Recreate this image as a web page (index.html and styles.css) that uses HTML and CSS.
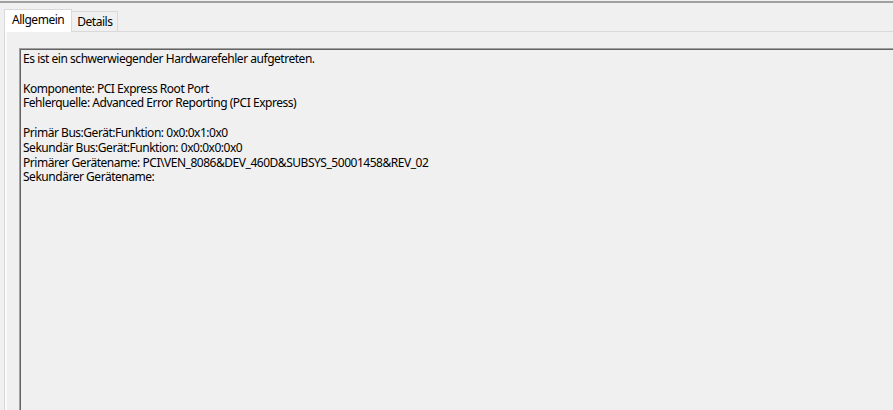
FILE: index.html
```html
<!DOCTYPE html>
<html lang="de">
<head>
<meta charset="utf-8">
<link rel="stylesheet" href="styles.css">
</head>
<body>
<div class="window">
  <div class="tabs">
    <div class="tab tab-active">Allgemein</div>
    <div class="tab">Details</div>
  </div>
  <div class="panel">
    <div class="textbox">
      <div class="line">Es ist ein schwerwiegender Hardwarefehler aufgetreten.</div>
      <div class="line">&nbsp;</div>
      <div class="line">Komponente: PCI Express Root Port</div>
      <div class="line">Fehlerquelle: Advanced Error Reporting (PCI Express)</div>
      <div class="line">&nbsp;</div>
      <div class="line">Primär Bus:Gerät:Funktion: 0x0:0x1:0x0</div>
      <div class="line">Sekundär Bus:Gerät:Funktion: 0x0:0x0:0x0</div>
      <div class="line">Primärer Gerätename: PCI\VEN_8086&amp;DEV_460D&amp;SUBSYS_50001458&amp;REV_02</div>
      <div class="line">Sekundärer Gerätename:</div>
    </div>
  </div>
</div>
</body>
</html>
```

FILE: styles.css
```css
html, body {
  margin: 0;
  padding: 0;
  background: #f0f0f0;
  overflow: hidden;
  width: 893px;
  height: 410px;
}

body {
  font-family: "Noto Sans", "Open Sans", sans-serif;
  font-size: 12px;
  letter-spacing: -0.47px;
  color: #000;
}

.window {
  box-sizing: border-box;
  margin-top: 1px;
  border-top: 2px solid #a0a0a0;
  height: 409px;
  display: flex;
  flex-direction: column;
}

.tabs {
  display: flex;
  align-items: flex-end;
  padding-left: 4px;
  margin-top: 6px;
  position: relative;
  z-index: 1;
}

.tab {
  height: 19px;
  padding: 0 4px 0 5px;
  border: 1px solid #d9d9d9;
  border-bottom: none;
  border-left: none;
  background: #f0f0f0;
  line-height: 19px;
}

.tab-active {
  height: 22px;
  padding: 0 7px 0 7px;
  border-left: 1px solid #d9d9d9;
  background: #ffffff;
  line-height: 20px;
  margin-bottom: -1px;
}

.panel {
  flex: 1;
  min-height: 0;
  display: flex;
  flex-direction: column;
  margin-left: 4px;
  border-top: 1px solid #d9d9d9;
  border-left: 1px solid #d9d9d9;
  box-shadow: inset 2px 0 0 #fafafa;
  padding: 16px 0 0 14px;
}

.textbox {
  flex: 1;
  min-height: 0;
  overflow: hidden;
  border-top: 1px solid #a0a0a0;
  border-left: 1px solid #a0a0a0;
  box-shadow: inset 1px 1px 0 #646464;
  padding: 3px 0 0 3px;
  line-height: 14.8px;
  white-space: nowrap;
}
```
